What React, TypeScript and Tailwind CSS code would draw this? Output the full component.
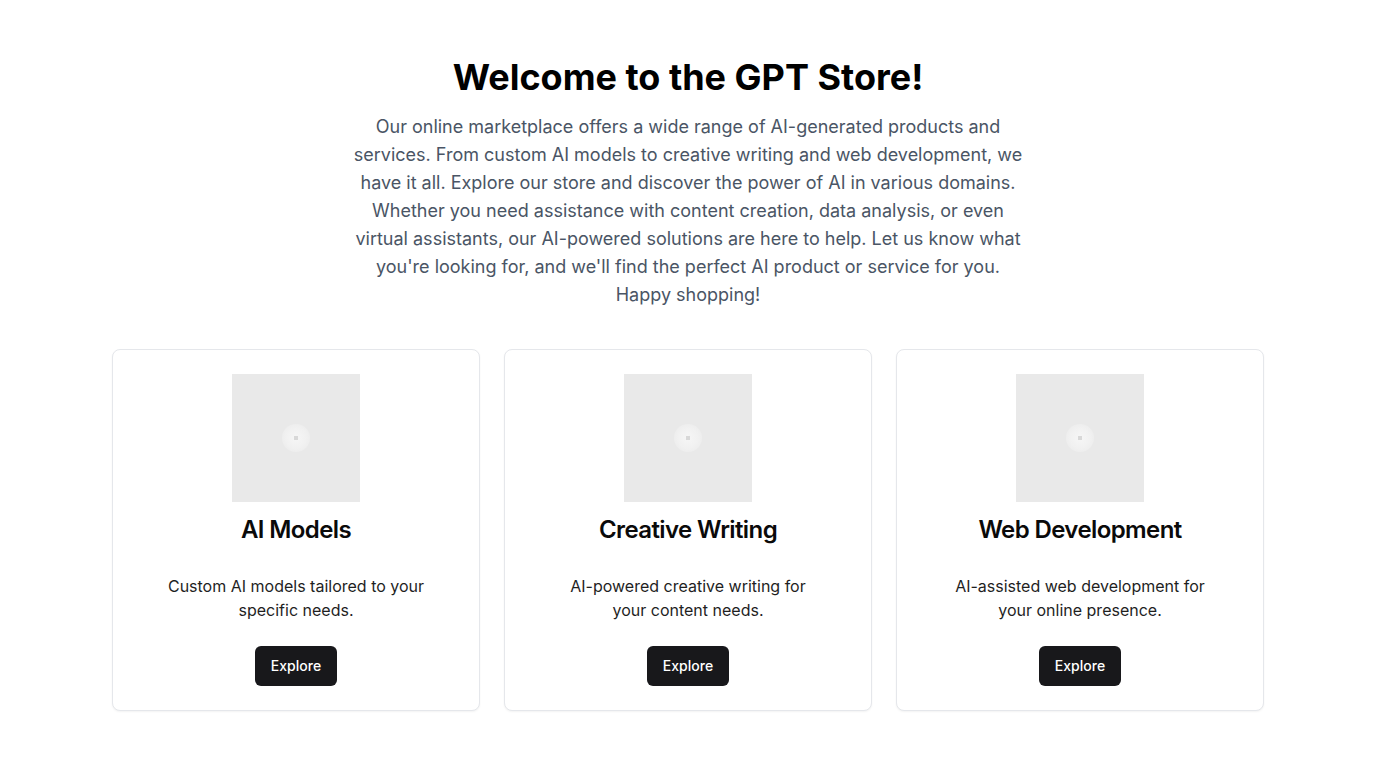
import React from "react";

const cards = [
  { title: "AI Models", desc: ["Custom AI models tailored to your", "specific needs."] },
  { title: "Creative Writing", desc: ["AI-powered creative writing for", "your content needs."] },
  { title: "Web Development", desc: ["AI-assisted web development for", "your online presence."] },
];

export default function App() {
  return (
    <div className="min-h-screen bg-white" style={{ fontFamily: "Inter, 'Noto Sans', sans-serif" }}>
      <div className="mx-auto max-w-6xl pt-[57px] pb-12">
        <h1 className="text-center text-4xl leading-10 font-bold text-black">Welcome to the GPT Store!</h1>
        <p className="mx-auto mt-4 max-w-2xl text-center text-lg leading-7 text-gray-600">
          Our online marketplace offers a wide range of AI-generated products and services. From custom AI models to creative writing and web development, we have it all. Explore our store and discover the power of AI in various domains. Whether you need assistance with content creation, data analysis, or even virtual assistants, our AI-powered solutions are here to help. Let us know what you're looking for, and we'll find the perfect AI product or service for you. Happy shopping!
        </p>
        <div className="mt-10 grid grid-cols-3 gap-6">
          {cards.map((c) => (
            <div key={c.title} className="flex flex-col items-center rounded-lg border border-gray-200 bg-white p-6 shadow-xs">
              <div className="flex h-32 w-32 items-center justify-center bg-[#e9e9e9]">
                <div className="flex h-7 w-7 items-center justify-center rounded-full bg-[radial-gradient(circle,#f6f6f6_0%,#f1f1f1_50%,#e9e9e9_100%)]">
                  <div className="h-1 w-1 bg-[#d8d8d8]" />
                </div>
              </div>
              <h2 className="mt-3 text-2xl leading-8 font-semibold text-[#0a0a0a] tracking-tight">{c.title}</h2>
              <p className="mt-7 text-center text-base leading-6 text-[#1f1f1f]">
                {c.desc[0]}
                <br />
                {c.desc[1]}
              </p>
              <button className="mt-6 h-10 rounded-md bg-[#18181b] px-4 text-sm font-medium text-white">Explore</button>
            </div>
          ))}
        </div>
      </div>
    </div>
  );
}
